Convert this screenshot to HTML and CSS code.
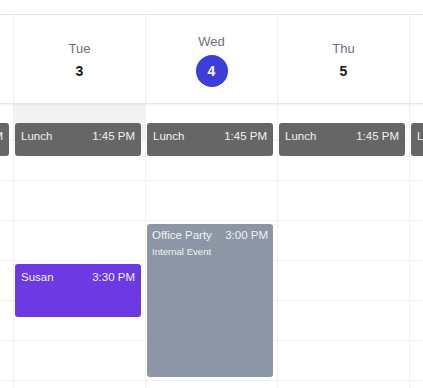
FILE: index.html
```html
<!DOCTYPE html>
<html lang="en">
    <head>
        <meta charset="UTF-8" />
        <meta name="viewport" content="width=device-width, initial-scale=1.0" />
        <title>Week view</title>
        <link rel="stylesheet" href="styles.css" />
    </head>
    <body>
        <div class="calendar">
            <div class="week">
                <div class="header-row">
                    <div class="day-head">
                        <span class="day-name">Mon</span>
                        <span class="day-num">2</span>
                    </div>
                    <div class="day-head">
                        <span class="day-name">Tue</span>
                        <span class="day-num">3</span>
                    </div>
                    <div class="day-head">
                        <span class="day-name">Wed</span>
                        <span class="day-num today">4</span>
                    </div>
                    <div class="day-head">
                        <span class="day-name">Thu</span>
                        <span class="day-num">5</span>
                    </div>
                    <div class="day-head">
                        <span class="day-name">Fri</span>
                        <span class="day-num">6</span>
                    </div>
                </div>

                <div class="body-row">
                    <div class="day-col">
                        <div class="event lunch" style="top: 19px; height: 33px">
                            <div class="event-line"><span>Lunch</span><span>1:45 PM</span></div>
                        </div>
                    </div>
                    <div class="day-col">
                        <div class="slot-shade"></div>
                        <div class="event lunch" style="top: 19px; height: 33px">
                            <div class="event-line"><span>Lunch</span><span>1:45 PM</span></div>
                        </div>
                        <div class="event susan" style="top: 160px; height: 53px">
                            <div class="event-line"><span>Susan</span><span>3:30 PM</span></div>
                        </div>
                    </div>
                    <div class="day-col">
                        <div class="event lunch" style="top: 19px; height: 33px">
                            <div class="event-line"><span>Lunch</span><span>1:45 PM</span></div>
                        </div>
                        <div class="event party" style="top: 120px; height: 153px">
                            <div class="event-line"><span>Office Party</span><span>3:00 PM</span></div>
                            <div class="event-note">Internal Event</div>
                        </div>
                    </div>
                    <div class="day-col">
                        <div class="event lunch" style="top: 19px; height: 33px">
                            <div class="event-line"><span>Lunch</span><span>1:45 PM</span></div>
                        </div>
                    </div>
                    <div class="day-col">
                        <div class="event lunch" style="top: 19px; height: 33px">
                            <div class="event-line"><span>Lunch</span><span>1:45 PM</span></div>
                        </div>
                    </div>
                </div>
            </div>
        </div>
    </body>
</html>
```

FILE: styles.css
```css
html,
body {
    margin: 0;
    height: 100%;
    overflow: hidden;
    background-color: #fff;
    font-family: "Liberation Sans", Arial, sans-serif;
}

.calendar {
    padding-top: 14px;
    height: 100%;
    box-sizing: border-box;
    overflow: hidden;
}

.week {
    margin-left: -119px;
    width: 660px;
    height: 100%;
    display: flex;
    flex-direction: column;
    border-top: 1px solid #e6e6e8;
}

.header-row {
    display: flex;
    height: 88px;
    border-bottom: 1px solid #e4e5e8;
    box-shadow: 0 1px 2px rgba(0, 0, 0, 0.06);
    position: relative;
    z-index: 1;
}

.day-head {
    width: 132px;
    box-sizing: border-box;
    border-left: 1px solid #efeff1;
    display: flex;
    flex-direction: column;
    align-items: center;
    justify-content: center;
    gap: 4px;
    padding-top: 1px;
}

.day-name {
    font-size: 13px;
    line-height: 18px;
    color: #6b7080;
}

.day-num {
    font-size: 14px;
    line-height: 18px;
    font-weight: bold;
    color: #16171a;
}

.day-num.today {
    width: 32px;
    height: 32px;
    line-height: 32px;
    text-align: center;
    border-radius: 50%;
    background-color: #3b3ed9;
    color: #fff;
}

.body-row {
    flex: 1;
    display: flex;
}

.day-col {
    position: relative;
    width: 132px;
    box-sizing: border-box;
    border-left: 1px solid #f1f1f3;
    background-image: linear-gradient(#f1f1f2 1px, transparent 1px);
    background-size: 100% 40px;
    background-position: 0 36px;
}

.slot-shade {
    height: 36px;
    background-color: #f1f2f4;
}

.event {
    position: absolute;
    left: 1px;
    width: 126px;
    box-sizing: border-box;
    padding: 6px 6px 0 6px;
    border-radius: 3px;
    color: #f0f0f2;
    overflow: hidden;
}

.event-line {
    display: flex;
    justify-content: space-between;
    font-size: 11.5px;
    line-height: 14px;
}

.event-note {
    margin-top: 4px;
    font-size: 9.6px;
    line-height: 12px;
}

.lunch {
    background-color: #666666;
}

.susan {
    background-color: #6c39e3;
}

.party {
    padding-top: 4px;
    padding-right: 5px;
    padding-left: 5px;
    background-color: #8d96a4;
}
```
